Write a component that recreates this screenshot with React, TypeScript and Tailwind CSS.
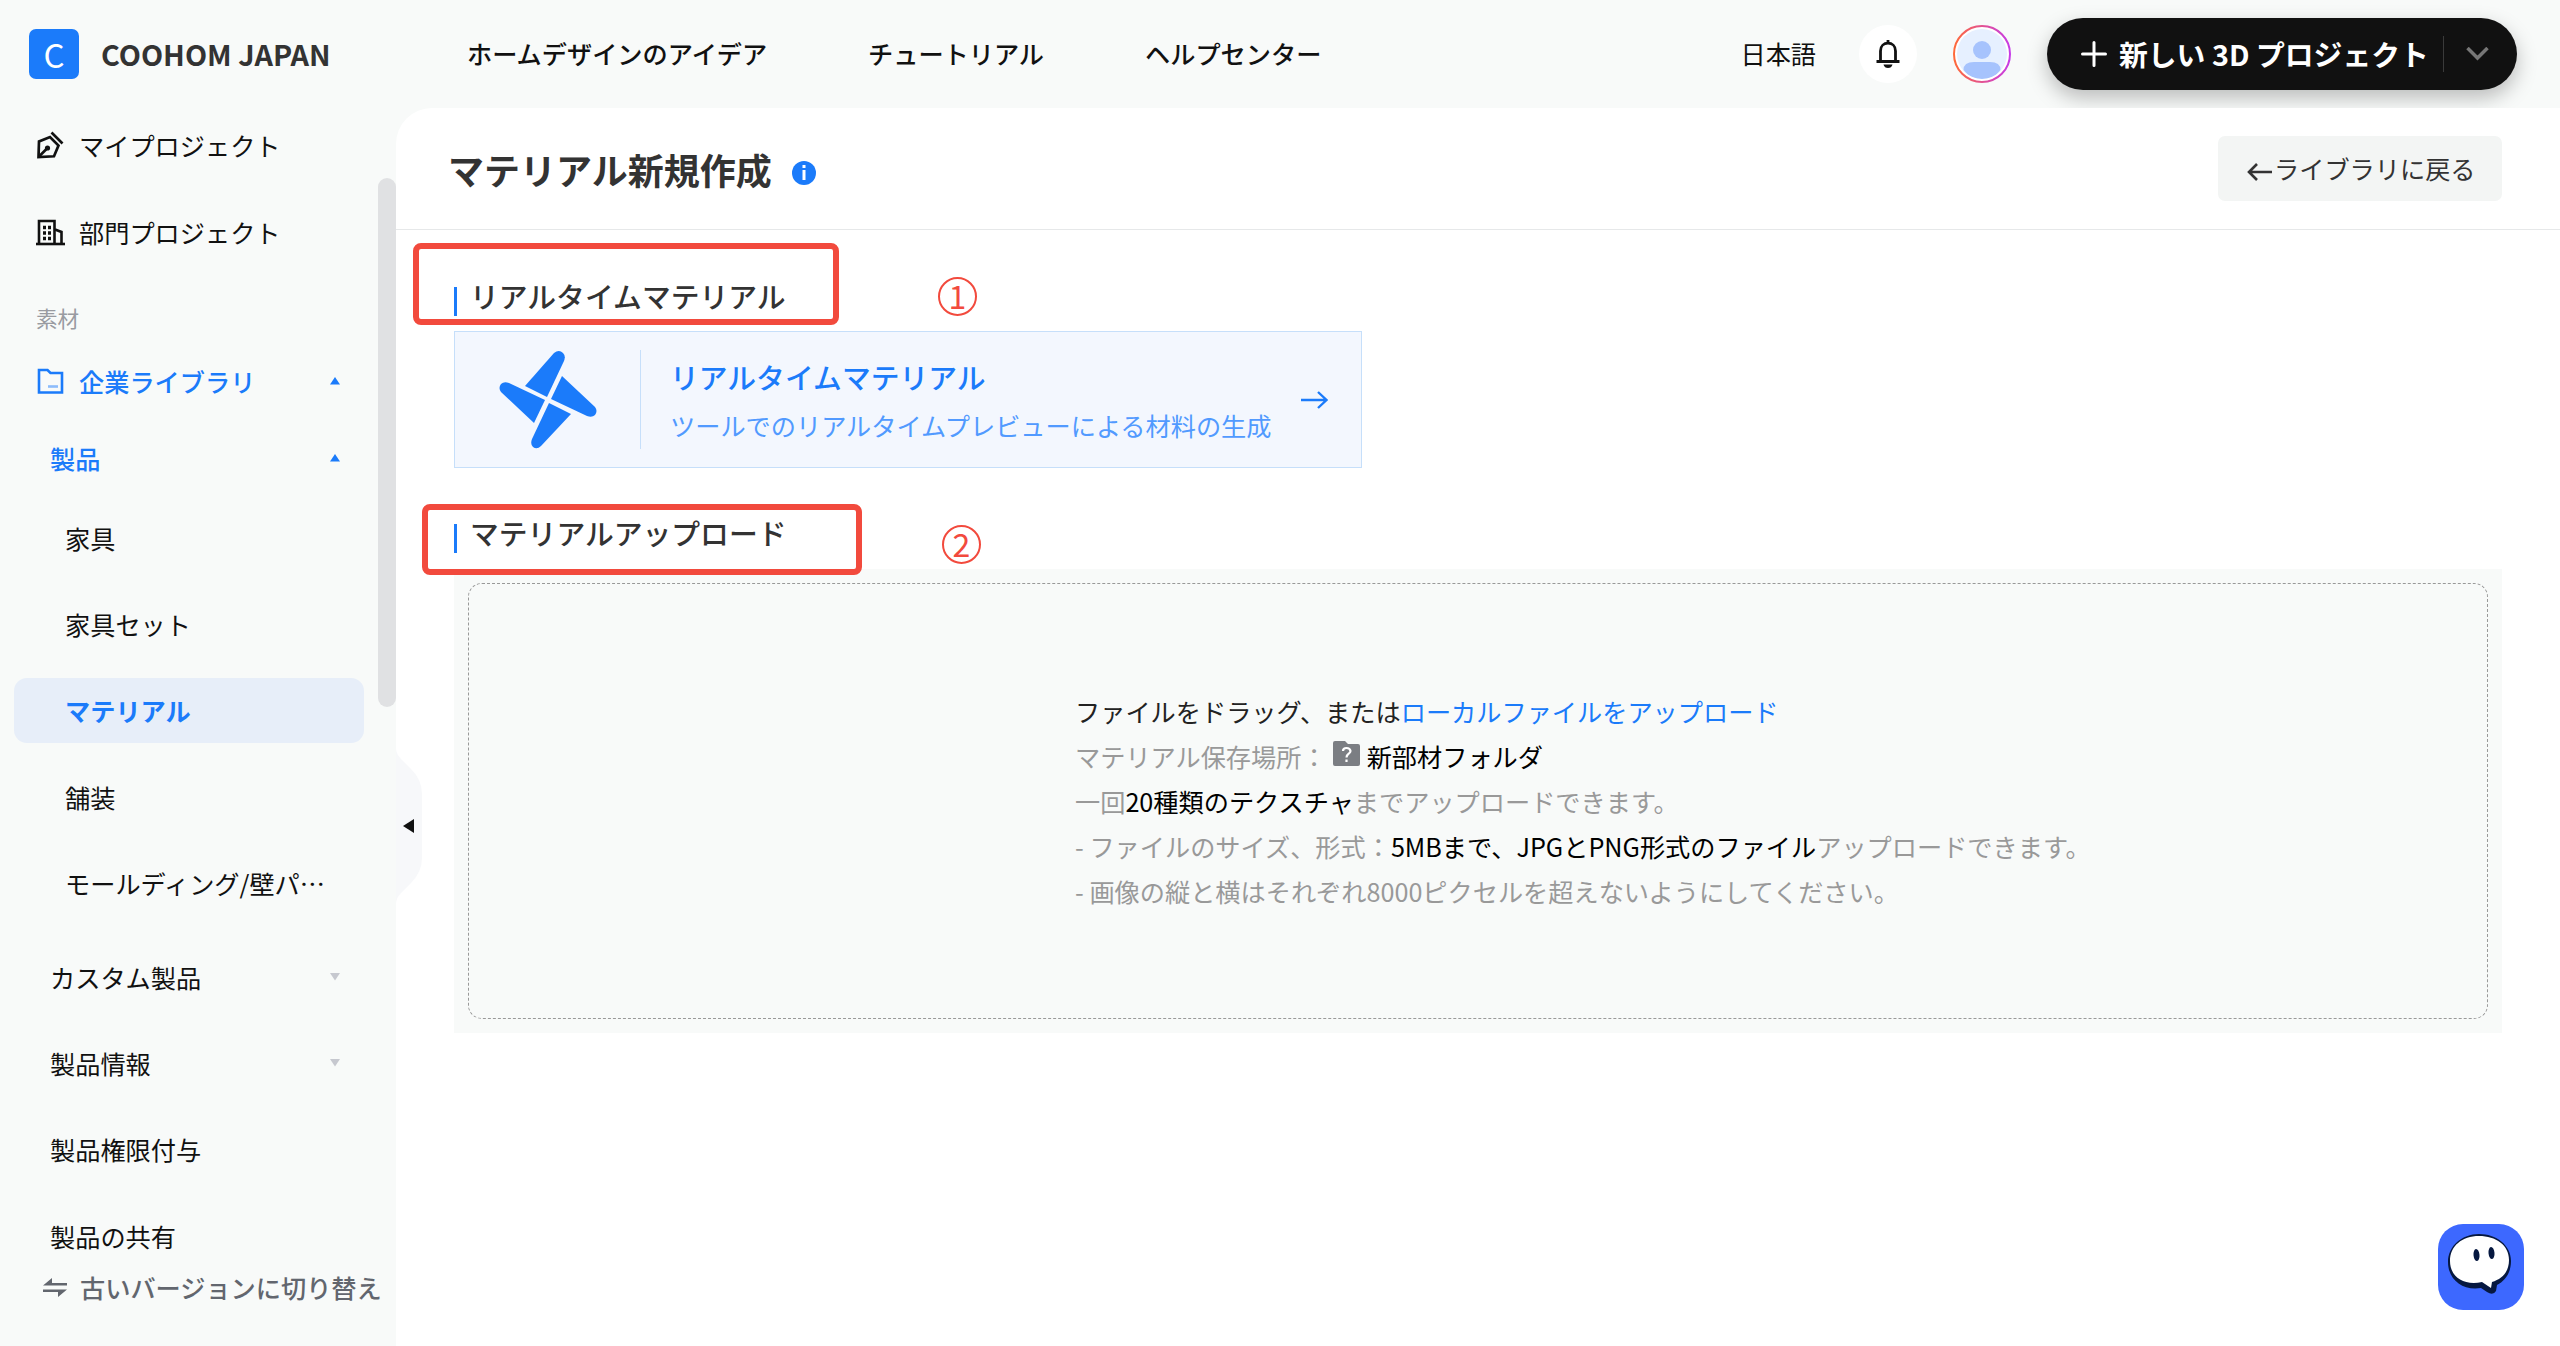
import type { ReactNode } from 'react';

type ItemProps = {
  label: string;
  className: string;
  caret?: 'up' | 'down';
};

const Caret = ({ dir }: { dir: 'up' | 'down' }) => (
  <svg width="10" height="8" viewBox="0 0 10 8" className="mr-[56px] shrink-0">
    {dir === 'up' ? (
      <path d="M5 0L10 7.500H0Z" fill="#1b7bfa" />
    ) : (
      <path d="M0 0H10L5 7.500Z" fill="#c6c8cf" />
    )}
  </svg>
);

const Item = ({ label, className, caret }: ItemProps) => (
  <div className={`flex shrink-0 items-center justify-between ${className}`}>
    <span className="whitespace-nowrap">{label}</span>
    {caret && <Caret dir={caret} />}
  </div>
);

const PenIcon = () => (
  <svg width="28" height="28" viewBox="0 0 28 28" fill="none" stroke="#111" strokeWidth="2.700">
    <path d="M2.500 26L3 10.500L14 6L22.500 14.500L18 25.300Z" />
    <path d="M15.500 1.500L26.500 12.500" />
    <path d="M3 25.500L11 17.500" />
    <circle cx="11.500" cy="17" r="2.600" fill="#111" stroke="none" />
  </svg>
);

const BuildingIcon = () => (
  <svg width="29" height="27" viewBox="0 0 29 27" fill="none" stroke="#111" strokeWidth="2.600">
    <path d="M3 25V2H18.500V25" />
    <path d="M19 10.500L25.500 13V25" />
    <path d="M0 25H29" />
    <path d="M7 8.500H10M12 8.500H15M7 14H10M12 14H15M7 19.500H10M12 19.500H15" strokeWidth="3.400" />
  </svg>
);

const FolderIcon = () => (
  <svg width="27" height="27" viewBox="0 0 27 27" fill="none" stroke="#1b7bfa" strokeWidth="2.600">
    <path d="M2 2H10.500L13.500 5H25V24.500H2Z" />
    <path d="M11 18.500H21" stroke="#8dbcfb" />
  </svg>
);

const Sidebar = () => (
  <aside className="relative flex w-[396px] shrink-0 flex-col text-[25.2px] leading-10 text-[#111]">
    <div className="flex h-[74px] shrink-0 items-center gap-[15px] pl-[36px]">
      <PenIcon />
      <span>マイプロジェクト</span>
    </div>
    <div className="mt-[12px] flex h-[76px] shrink-0 items-center gap-[14px] pl-[36px]">
      <BuildingIcon />
      <span>部門プロジェクト</span>
    </div>
    <div className="mt-[28px] pl-[36px] text-[21.6px] text-[#999ba1]">素材</div>
    <div className="mt-[23px] flex h-10 shrink-0 items-center pl-[37px] font-medium text-[#1b7bfa]">
      <FolderIcon />
      <span className="ml-[15px] flex-1">企業ライブラリ</span>
      <Caret dir="up" />
    </div>
    <Item label="製品" className="mt-[37px] h-10 pl-[50px] font-medium text-[#1b7bfa]" caret="up" />
    <Item label="家具" className="mt-[40px] h-10 pl-[65px]" />
    <Item label="家具セット" className="mt-[46px] h-10 pl-[65px]" />
    <Item
      label="マテリアル"
      className="mt-[34px] ml-[14px] h-[65px] w-[350px] rounded-[13px] bg-[#e7eef9] pb-[2px] pl-[51px] font-bold text-[#1b7bfa]"
    />
    <Item label="舗装" className="mt-[34px] h-10 pl-[65px]" />
    <Item label="モールディング/壁パ⋯" className="mt-[46px] h-10 pl-[65px]" />
    <Item label="カスタム製品" className="mt-[54px] h-10 pl-[50px]" caret="down" />
    <Item label="製品情報" className="mt-[46px] h-10 pl-[50px]" caret="down" />
    <Item label="製品権限付与" className="mt-[46px] h-10 pl-[50px]" />
    <Item label="製品の共有" className="mt-[47px] h-10 pl-[50px]" />
    <div className="mt-[11px] flex h-10 shrink-0 items-center gap-[12px] pl-[43px] font-medium text-[#62666e]">
      <svg width="25" height="19" viewBox="0 0 25 19" fill="#62666e">
        <path d="M0 7.500L9 0V5H24V7.500Z" />
        <path d="M0 11.500H24L15 19V14H0Z" />
      </svg>
      <span className="whitespace-nowrap">古いバージョンに切り替え</span>
    </div>
    {/* scrollbar thumb and collapse handle */}
    <div className="absolute top-[70px] right-0 h-[529px] w-[18px] rounded-full bg-[#e0e1e3]" />
    <svg width="26" height="156" viewBox="0 0 26 156" className="absolute top-[640px] -right-[26px] z-10">
      <path d="M0 0Q0 6 5 11L15 21Q26 32 26 46V110Q26 124 15 135L5 145Q0 150 0 156Z" fill="#f7f8fa" />
      <path d="M7 78L18 71V85Z" fill="#111" />
    </svg>
  </aside>
);

const Header = () => (
  <header className="flex h-[108px] shrink-0 items-center text-[25.2px] text-[#111]">
    <div className="ml-[29px] flex h-[50px] w-[50px] items-center justify-center rounded-[7px] bg-[#1b7bfa] text-[33px] leading-none text-white">
      C
    </div>
    <div className="ml-[22px] w-[366px] text-[28.8px] font-bold whitespace-nowrap text-[#333]">
      COOHOM JAPAN
    </div>
    <nav className="flex flex-1 items-center font-medium whitespace-nowrap">
      <span className="w-[401px]">ホームデザインのアイデア</span>
      <span className="w-[277px]">チュートリアル</span>
      <span>ヘルプセンター</span>
    </nav>
    <span>日本語</span>
    <div className="ml-[43px] flex h-[58px] w-[58px] items-center justify-center rounded-full bg-white">
      <svg width="24" height="28" viewBox="0 0 24 28" fill="none" stroke="#111" strokeWidth="2.800">
        <path d="M12 0V3M0.500 21.500H23.500M4.500 21V11C4.500 6 8 3.200 12 3.200S19.500 6 19.500 11V21" />
        <path d="M7.500 24.500H16.500Q15.500 28 12 28T7.500 24.500Z" fill="#111" stroke="none" />
      </svg>
    </div>
    <svg width="58" height="58" viewBox="0 0 58 58" className="ml-[36px]">
      <defs>
        <linearGradient id="ring" x1="0" y1="0" x2="1" y2="0">
          <stop offset="0" stopColor="#ff6a3a" />
          <stop offset="1" stopColor="#c63be8" />
        </linearGradient>
        <clipPath id="face">
          <circle cx="29" cy="29" r="25" />
        </clipPath>
      </defs>
      <circle cx="29" cy="29" r="28" fill="#fff" stroke="url(#ring)" strokeWidth="2" />
      <circle cx="29" cy="29" r="25" fill="#e6f0ff" />
      <g fill="#a6c3fd" clipPath="url(#face)">
        <circle cx="29" cy="25" r="9" />
        <path d="M10.500 45Q10.500 37 21 37H37Q47.500 37 47.500 45Q41 54 29 54T10.500 45Z" />
      </g>
    </svg>
    <button className="mr-[43px] ml-[36px] flex h-[72px] w-[470px] items-center rounded-full bg-[#111] pl-[34px] text-[28.8px] font-bold text-white shadow-[0_8px_20px_rgba(0,0,0,0.25)]">
      <svg width="26" height="26" viewBox="0 0 26 26" stroke="#fff" strokeWidth="3" strokeLinecap="round">
        <path d="M13 1.500V24.500M1.500 13H24.500" />
      </svg>
      <span className="ml-[12px] whitespace-nowrap">新しい 3D プロジェクト</span>
      <span className="ml-auto h-[36px] w-px bg-[#3a3a3a]" />
      <svg width="23" height="14" viewBox="0 0 23 14" fill="none" stroke="#777" strokeWidth="3.500" className="mr-[28px] ml-[22px]">
        <path d="M1.500 1L11.500 11L21.500 1" />
      </svg>
    </button>
  </header>
);

const SectionTitle = ({ children, className }: { children: ReactNode; className: string }) => (
  <div className={`flex items-center text-[28.8px] leading-10 font-medium text-[#333] ${className}`}>
    <span className="mt-[9px] mr-[13px] h-[29px] w-[3px] bg-[#1b7bfa]" />
    <span className="-mt-px mb-px h-10">{children}</span>
  </div>
);

const RealtimeCard = () => (
  <div className="mt-[14px] flex h-[137px] w-[908px] items-center border border-[#c6dffa] bg-[#f3f7fe]">
    <svg width="98" height="98" viewBox="0 0 98 98" fill="#1b7bfa" className="ml-[44px]">
      <path d="M26 35L55 2Q60 -2 64 2Q67 5 65 10L48 46Z" />
      <path d="M63 25L96 56Q99 60 96 64Q93 67 88 65L52 48Z" />
      <path d="M72 63L42 95Q38 99 34 96Q31 93 33 88L50 52Z" />
      <path d="M35 72L2 41Q-1 37 2 33Q5 30 10 32L46 49Z" />
    </svg>
    <span className="ml-[43px] h-[99px] w-px bg-[#c6dffa]" />
    <div className="ml-[29px] flex-1 pt-[3px] whitespace-nowrap">
      <div className="text-[28.8px] leading-[48px] font-medium text-[#1b7bfa]">リアルタイムマテリアル</div>
      <div className="text-[25.2px] leading-[48px] text-[#519aff]">
        ツールでのリアルタイムプレビューによる材料の生成
      </div>
    </div>
    <svg width="27" height="18" viewBox="0 0 27 18" fill="none" stroke="#1b7bfa" strokeWidth="2.400" className="mr-[33px]">
      <path d="M0 9H25M17 1L25.500 9L17 17" />
    </svg>
  </div>
);

const UploadPanel = () => (
  <div className="mt-[15px] h-[464px] w-[2048px] bg-[#f8faf9] p-[14px]">
    <div className="flex h-full flex-col justify-center rounded-[14px] border border-dashed border-[#999] pl-[606px] text-[25.2px] leading-[45px] whitespace-nowrap text-[#999]">
      <p className="text-[#222]">
        ファイルをドラッグ、または<span className="text-[#1b7bfa]">ローカルファイルをアップロード</span>
      </p>
      <p className="flex">
        マテリアル保存場所：
        <svg width="27" height="25" viewBox="0 0 27 25" className="mt-[7px] mr-[7px] ml-[6px]">
          <path d="M2 0H12L15 3H25Q27 3 27 5V23Q27 25 25 25H2Q0 25 0 23V2Q0 0 2 0Z" fill="#7b7e83" />
          <path d="M10 10Q10 7 13.500 7T17.500 10C17.500 13 13.500 12.500 13.500 16.500M13.500 18.500V21" fill="none" stroke="#fff" strokeWidth="2.200" />
        </svg>
        <span className="text-black">新部材フォルダ</span>
      </p>
      <p>
        一回<span className="text-black">20種類のテクスチャ</span>までアップロードできます。
      </p>
      <p>
        - ファイルのサイズ、形式：
        <span className="text-black">5MBまで、JPGとPNG形式のファイル</span>アップロードできます。
      </p>
      <p>- 画像の縦と横はそれぞれ8000ピクセルを超えないようにしてください。</p>
    </div>
  </div>
);

const StepMark = ({ step, className }: { step: number; className: string }) => (
  <span
    className={`absolute flex h-[39px] w-[39px] items-center justify-center rounded-full border-2 border-[#f24a3d] pb-[3px] text-[32px] leading-none text-[#f24a3d] ${className}`}
  >
    {step}
  </span>
);

const ChatButton = () => (
  <svg width="86" height="86" viewBox="0 0 86 86" className="absolute top-[1224px] left-[2438px]">
    <rect width="86" height="86" rx="25" fill="#3d68ff" />
    <path d="M41 10C58 10 73 21 73 37C73 49 67 57 59 61L58 67Q55 72 49 68L43 64C25 67 10 56 10 38C10 22 24 10 41 10Z" fill="#061840" />
    <path d="M41 12C58 12 71 21 71 36C71 48 64 55 54 58L53 64L44 58C26 62 12 53 12 37C12 22 24 12 41 12Z" fill="#fff" />
    <ellipse cx="38.500" cy="31" rx="3" ry="6" fill="#061840" transform="rotate(-5 38.500 31)" />
    <ellipse cx="53.500" cy="29" rx="3" ry="6" fill="#061840" transform="rotate(-5 53.500 29)" />
  </svg>
);

export default function App() {
  return (
    <div className="relative flex h-[1346px] w-[2560px] flex-col overflow-hidden bg-[#f8faf9] font-['Noto_Sans_CJK_JP',sans-serif]">
      <Header />
      <div className="flex min-h-0 flex-1">
        <Sidebar />
        <main className="flex-1 rounded-tl-[36px] bg-white">
          <div className="flex h-[122px] items-center border-b border-[#e6e8e9] pr-[58px] pl-[52px]">
            <h1 className="text-[36px] font-bold text-[#333]">マテリアル新規作成</h1>
            <span className="mt-[8px] ml-[20px] flex h-6 w-6 items-center justify-center rounded-full bg-[#1b7bfa]">
              <svg width="4" height="16" viewBox="0 0 4 16" fill="#fff">
                <path d="M0.500 0H3.500V3H0.500ZM0.500 5H3.500V15H0.500Z" />
              </svg>
            </span>
            <button className="ml-auto flex h-[65px] w-[284px] items-center rounded-[7px] bg-[#f3f5f4] pl-[29px] text-[25.2px] text-[#333]">
              <svg width="25" height="18" viewBox="0 0 25 18" fill="none" stroke="#333" strokeWidth="2.600" className="mt-[7px] mr-[2px]">
                <path d="M25 9H2M10 1L2 9L10 17" />
              </svg>
              ライブラリに戻る
            </button>
          </div>
          <div className="pl-[58px]">
            <SectionTitle className="pt-[47px]">リアルタイムマテリアル</SectionTitle>
            <RealtimeCard />
            <SectionTitle className="mt-[46px]">マテリアルアップロード</SectionTitle>
            <UploadPanel />
          </div>
        </main>
      </div>
      {/* red callouts over the section titles */}
      <div className="absolute top-[243px] left-[413px] h-[82px] w-[426px] rounded-[8px] border-[6px] border-[#f24a3d]" />
      <div className="absolute top-[504px] left-[422px] h-[71px] w-[440px] rounded-[8px] border-[6px] border-[#f24a3d]" />
      <StepMark step={1} className="top-[277px] left-[938px]" />
      <StepMark step={2} className="top-[525px] left-[942px]" />
      <ChatButton />
    </div>
  );
}
